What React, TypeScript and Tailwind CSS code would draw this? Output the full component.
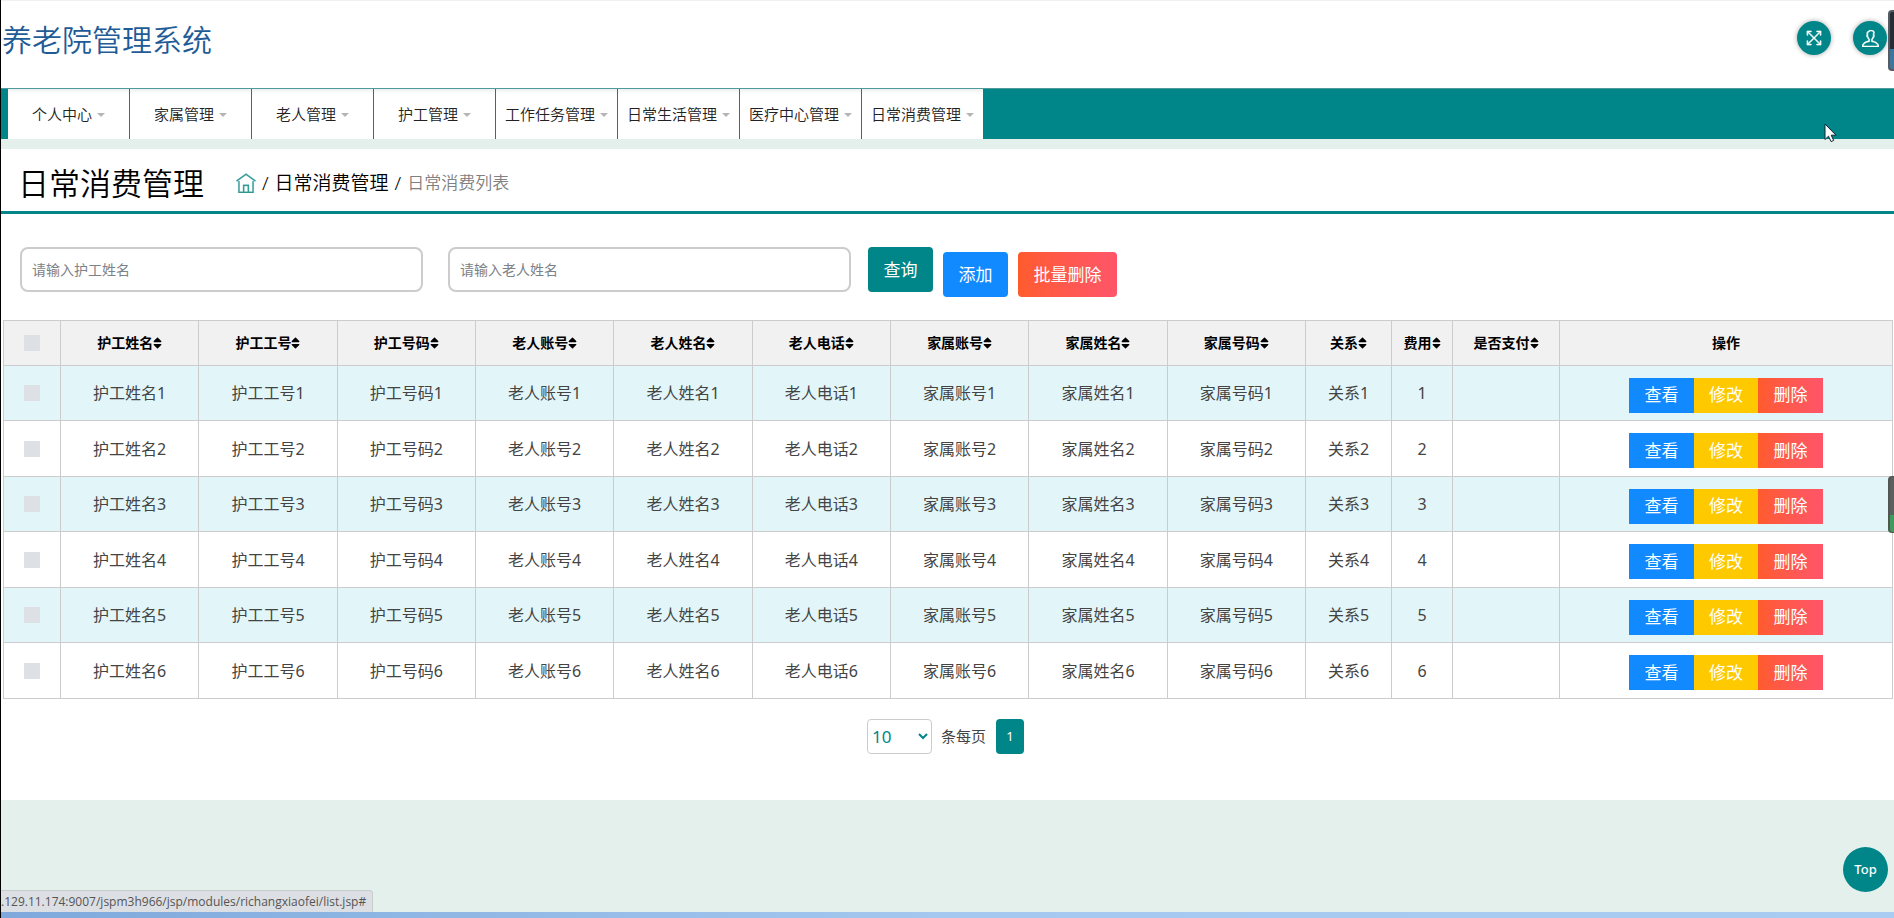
import { FaSort } from "react-icons/fa";
import { TfiFullscreen, TfiHome, TfiUser } from "react-icons/tfi";

const menus = [
  "个人中心",
  "家属管理",
  "老人管理",
  "护工管理",
  "工作任务管理",
  "日常生活管理",
  "医疗中心管理",
  "日常消费管理",
];

const nameColumns = [
  "护工姓名",
  "护工工号",
  "护工号码",
  "老人账号",
  "老人姓名",
  "老人电话",
  "家属账号",
  "家属姓名",
  "家属号码",
];

const sortable = [...nameColumns, "关系", "费用", "是否支付"];

const rows = [1, 2, 3, 4, 5, 6];

function Header() {
  return (
    <header className="flex h-[88px] items-start justify-between border-t border-[#f0f0f0] bg-white pr-[7px] pl-px">
      <div className="mt-[17px] text-[30px] leading-[44px] font-[350] text-[#1f5b96]">
        养老院管理系统
      </div>
      <div className="mt-5 flex gap-[22px]">
        <button
          aria-label="全屏"
          className="flex size-[34px] items-center justify-center rounded-full bg-[#008688] text-white shadow-[0_0_5px_rgba(0,0,0,0.35)]"
        >
          <TfiFullscreen className="size-4" strokeWidth={0.6} />
        </button>
        <button
          aria-label="用户"
          className="flex size-[34px] items-center justify-center rounded-full bg-[#008688] text-white shadow-[0_0_5px_rgba(0,0,0,0.35)]"
        >
          <TfiUser className="size-[17px]" strokeWidth={0.6} />
        </button>
      </div>
    </header>
  );
}

function Nav() {
  return (
    <nav className="flex h-[51px] border-t border-[#4f9a9a] bg-[#008688] pl-[7px]">
      {menus.map((menu) => (
        <a
          key={menu}
          href="#"
          className="flex w-[122px] items-center justify-center gap-[5px] border-r border-[#008688] bg-white bg-linear-to-b from-[#eef1f1] from-0% to-white to-10% pt-px text-[15px] font-[350] text-[#222]"
        >
          {menu}
          <span className="border-x-4 border-t-4 border-x-transparent border-t-[#b5b5b5]" />
        </a>
      ))}
    </nav>
  );
}

function Breadcrumb() {
  return (
    <div className="mt-[10px] flex h-[65px] items-center border-b-[3px] border-[#008688] bg-white pt-[6px] pl-[17px]">
      <h1 className="text-[31px] leading-[56px] font-[350] text-black">
        日常消费管理
      </h1>
      <div className="ml-8 flex items-center gap-[6px] text-[19px] font-[350] text-black">
        <a href="#" aria-label="首页" className="text-[#2f9896]">
          <TfiHome className="size-5" strokeWidth={0.3} />
        </a>
        <span>/</span>
        <a href="#">日常消费管理</a>
        <span>/</span>
        <span className="text-[17px] text-[#808080]">日常消费列表</span>
      </div>
    </div>
  );
}

function SearchBar() {
  return (
    <form className="flex items-start pl-[19px]">
      <input
        aria-label="护工姓名"
        placeholder="请输入护工姓名"
        className="mr-[25px] h-[45px] w-[403px] rounded-lg border-2 border-[#ccc] px-[10px] text-sm placeholder:text-[#7b8288]"
      />
      <input
        aria-label="老人姓名"
        placeholder="请输入老人姓名"
        className="mr-[17px] h-[45px] w-[403px] rounded-lg border-2 border-[#ccc] px-[10px] text-sm placeholder:text-[#7b8288]"
      />
      <button
        type="button"
        className="h-[45px] w-[65px] rounded bg-[#008688] text-[17px] text-white"
      >
        查询
      </button>
      <button
        type="button"
        className="mt-[5px] ml-[10px] h-[45px] w-[65px] rounded bg-[#118aff] text-[17px] text-white"
      >
        添加
      </button>
      <button
        type="button"
        className="mt-[5px] ml-[10px] h-[45px] w-[99px] rounded bg-linear-to-r from-[#ff5b2b] to-[#ff5569] text-[17px] text-white"
      >
        批量删除
      </button>
    </form>
  );
}

function Checkbox({ label }: { label: string }) {
  return (
    <input
      type="checkbox"
      aria-label={label}
      className="mx-auto block size-4 appearance-none bg-[#dde1e6] checked:bg-[#008688]"
    />
  );
}

function ListTable() {
  return (
    <div className="mt-[23px] pr-px pl-[2px]">
      <table className="w-full table-fixed border-collapse text-center text-base text-[#444] [&_td]:border [&_td]:border-[#ccc] [&_th]:border [&_th]:border-[#ccc]">
        <colgroup>
          <col className="w-[57px]" />
          {nameColumns.map((name) => (
            <col key={name} />
          ))}
          <col className="w-[86px]" />
          <col className="w-[61px]" />
          <col className="w-[107px]" />
          <col className="w-[333px]" />
        </colgroup>
        <thead>
          <tr className="h-[45px] bg-[#f1f1f1] text-sm text-black">
            <th>
              <Checkbox label="全选" />
            </th>
            {sortable.map((name) => (
              <th key={name}>
                <span className="inline-flex items-center">
                  {name}
                  <FaSort className="h-[14px] w-[9px]" />
                </span>
              </th>
            ))}
            <th>操作</th>
          </tr>
        </thead>
        <tbody>
          {rows.map((n) => (
            <tr key={n} className="h-[55px] odd:bg-[#e2f6f9] even:h-[56px]">
              <td>
                <Checkbox label={`选择第${n}行`} />
              </td>
              {nameColumns.map((name) => (
                <td key={name}>
                  {name}
                  {n}
                </td>
              ))}
              <td>关系{n}</td>
              <td>{n}</td>
              <td></td>
              <td>
                <div className="flex justify-center pt-1 text-[17px] text-white">
                  <button className="h-[35px] w-[65px] bg-[#118aff]">
                    查看
                  </button>
                  <button className="h-[35px] w-[64px] bg-[#ffc900]">
                    修改
                  </button>
                  <button className="h-[35px] w-[65px] bg-linear-to-r from-[#ff5b2b] to-[#ff5569]">
                    删除
                  </button>
                </div>
              </td>
            </tr>
          ))}
        </tbody>
      </table>
    </div>
  );
}

function Pagination() {
  return (
    <div className="mt-5 flex items-center justify-center pr-1 text-[15px] text-[#444]">
      <label className="flex items-center gap-[9px]">
        <select className="h-[35px] w-[65px] rounded border border-[#ccc] bg-white text-[17px] text-[#008688]">
          <option>10</option>
          <option>25</option>
          <option>50</option>
        </select>
        条每页
      </label>
      <button className="ml-[10px] h-[35px] w-7 rounded bg-[#008688] text-[13px] text-white">
        1
      </button>
    </div>
  );
}

// parts of other windows that lie over the page
function Overlays() {
  return (
    <>
      <div className="fixed top-[10px] right-0 h-[61px] w-[6px] rounded-l-sm border-y-2 border-l-2 border-[#555c64] bg-linear-to-b from-[#262d35] from-65% to-[#3f759b] to-65%" />
      <div className="fixed top-[476px] right-0 h-[57px] w-[6px] rounded-l-sm border-y border-l-2 border-[#505652] bg-linear-to-b from-[#5b5f5e] from-70% to-[#3f9a5b] to-70%" />
      <svg
        className="fixed top-[123px] left-[1824px] h-5 w-[13px]"
        viewBox="0 0 13 20"
      >
        <path
          d="M1 1v15.500l3.500-3.300 2.600 5.400 2.600-1.200-2.500-5.200h4.800z"
          fill="#fff"
          stroke="#123"
          strokeWidth="1"
        />
      </svg>
      <button className="fixed right-[6px] bottom-[26px] size-[45px] rounded-full bg-[#008688] text-[13px] font-medium text-white">
        Top
      </button>
      <div className="fixed bottom-[6px] left-px h-[22px] rounded-tr border-t border-r border-[#c8cccc] bg-[#dcdfe3] pr-[6px] font-['Open_Sans','Noto_Sans',sans-serif] text-[12px] leading-[22px] text-[#555]">
        .129.11.174:9007/jspm3h966/jsp/modules/richangxiaofei/list.jsp#
      </div>
    </>
  );
}

export default function App() {
  return (
    <div className="flex min-h-screen flex-col border-l border-black bg-[#e4f0eb] font-['Noto_Sans','Noto_Sans_CJK_SC',sans-serif]">
      <Header />
      <Nav />
      <Breadcrumb />
      <main className="bg-white pt-[33px] pb-[46px]">
        <SearchBar />
        <ListTable />
        <Pagination />
      </main>
      <div className="mt-auto h-[6px] bg-linear-to-r from-[#7fa9dc] via-[#a4c8ef] to-[#a9cdf2]" />
      <Overlays />
    </div>
  );
}
